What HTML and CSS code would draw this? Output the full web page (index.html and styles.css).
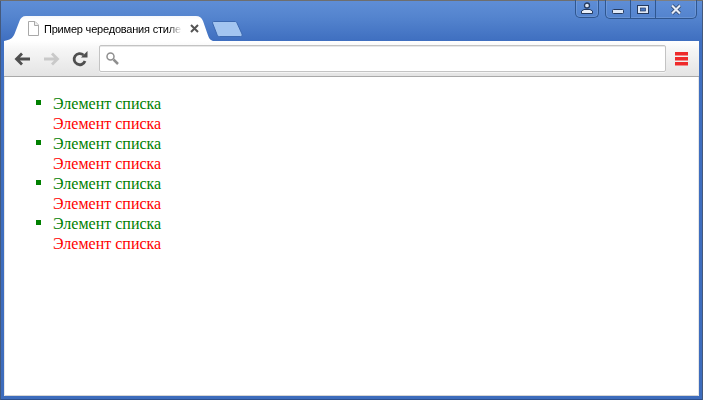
FILE: index.html
```html
<!DOCTYPE html>
<html lang="ru">
<head>
<meta charset="utf-8">
<title>Пример чередования стилей</title>
<link rel="stylesheet" href="styles.css">
</head>
<body>
<div class="window">
  <div class="titlebar">
    <div class="tab">
      <svg class="tab-shape" width="209" height="25" viewBox="0 0 209 25"><defs><linearGradient id="tabfill" x1="0" y1="0" x2="0" y2="1"><stop offset="0" stop-color="#f6f8fb"/><stop offset="0.15" stop-color="#fff"/></linearGradient></defs><path d="M0 25C6 24 8.500 22.500 10.500 18L15.500 5C16.500 2 18.500 0 22 0H192C195.500 0 197.500 1.500 199 5L203.500 18C205 22.500 206 24 209 25Z" fill="url(#tabfill)"/></svg>
      <svg class="page-icon" width="13" height="17" viewBox="0 0 13 17"><path d="M1.500 1.500H8L11.500 5V15.500H1.500Z" fill="#fff" stroke="#a9a9a9"/><path d="M7.500 1.500V5.500H11.500" fill="#eee" stroke="#a9a9a9"/></svg>
      <span class="tab-title">Пример чередования стиле</span>
      <svg class="tab-close" width="9" height="9" viewBox="0 0 9 9"><path d="M1 1L8 8M8 1L1 8" stroke="#555" stroke-width="2"/></svg>
    </div>
    <svg class="new-tab" width="31" height="16" viewBox="0 0 31 16"><path d="M0.500 2C0.500 1 1 0.500 2 0.500H23C24 0.500 24.500 1 25 2L30 13C30.500 14.500 30 15.500 28.500 15.500H7.500C6 15.500 5.500 15 5 13.500Z" fill="#a3c5f0" stroke="#3c69b0"/></svg>
    <div class="controls">
      <div class="ctl ctl-user">
        <svg width="14" height="13" viewBox="0 0 14 13"><circle cx="7" cy="3.500" r="2.500" fill="#dfe8f6" stroke="#253a5e" stroke-width="1.300"/><path d="M1.500 11.500V9L4 7.500H10L12.500 9V11.500Z" fill="#e8eef8" stroke="#253a5e"/></svg>
      </div>
      <div class="ctl-group">
        <div class="ctl ctl-min"><svg width="12" height="5" viewBox="0 0 12 5"><rect x="0.500" y="0.500" width="11" height="4" rx="1" fill="#dfe8f6" stroke="#253a5e"/></svg></div>
        <div class="ctl ctl-max"><svg width="12" height="9" viewBox="0 0 12 9"><rect x="0.500" y="0.500" width="11" height="8" fill="#dfe8f6" stroke="#253a5e"/><rect x="3.500" y="3" width="5" height="3" fill="#4a78c4" stroke="#253a5e" stroke-width="0.700"/></svg></div>
        <div class="ctl ctl-close"><svg width="12" height="11" viewBox="0 0 12 11"><path d="M2 1.500L10 9.500M10 1.500L2 9.500" stroke="#253a5e" stroke-width="3.600"/><path d="M2 1.500L10 9.500M10 1.500L2 9.500" stroke="#e6edf8" stroke-width="2.200"/></svg></div>
      </div>
    </div>
  </div>
  <div class="toolbar">
    <svg class="nav" width="17" height="14" viewBox="0 0 17 14"><path d="M16 7H4M8 1.500L2.500 7L8 12.500" fill="none" stroke="#4f4f4f" stroke-width="2.800"/></svg>
    <svg class="nav" width="17" height="14" viewBox="0 0 17 14"><path d="M1 7H13M9 1.500L14.500 7L9 12.500" fill="none" stroke="#c9c9c9" stroke-width="2.800"/></svg>
    <svg class="nav" width="16" height="16" viewBox="0 0 16 16"><path d="M13 10A5.600 5.600 0 1 1 11.500 4" fill="none" stroke="#4f4f4f" stroke-width="2.800"/><path d="M9 6.500H15.500V0Z" fill="#4f4f4f"/></svg>
    <div class="omnibox">
      <svg width="15" height="15" viewBox="0 0 15 15"><circle cx="5.500" cy="5.500" r="3.500" fill="none" stroke="#8f8f8f" stroke-width="1.500"/><path d="M8.500 8.500L13 13" stroke="#8f8f8f" stroke-width="2.500"/></svg>
    </div>
    <div class="menu"><span></span><span></span><span></span></div>
  </div>
  <div class="content">
    <ul class="list">
      <li class="odd">Элемент списка</li>
      <li class="even">Элемент списка</li>
      <li class="odd">Элемент списка</li>
      <li class="even">Элемент списка</li>
      <li class="odd">Элемент списка</li>
      <li class="even">Элемент списка</li>
      <li class="odd">Элемент списка</li>
      <li class="even">Элемент списка</li>
    </ul>
  </div>
</div>
</body>
</html>
```
FILE: styles.css
```css
html, body { margin: 0; padding: 0; height: 100%; overflow: hidden; }
.window {
  width: 703px; height: 400px; box-sizing: border-box;
  display: flex; flex-direction: column;
  padding: 0 4px 4px 4px;
  background: linear-gradient(to bottom, #5f8ed6 0, #5585cf 16px, #3f6fc0 41px, #3d6cbc 100%);
  box-shadow: inset 0 1px 0 #6e6e6e, inset 1px 0 0 #44597c, inset -1px 0 0 #44597c, inset 0 -1px 0 #2d4f8c;
}
.titlebar { height: 41px; flex: none; display: flex; align-items: flex-end; position: relative; }
.tab {
  position: relative; width: 209px; height: 25px; flex: none;
  display: flex; align-items: center; box-sizing: border-box; padding-left: 23px;
}
.tab-shape { position: absolute; left: 0; top: 0; }
.page-icon, .tab-title, .tab-close { position: relative; }
.page-icon { flex: none; margin-right: 4px; margin-top: -1px; }
.tab-title {
  font: 11px/14px "Liberation Sans", Arial, sans-serif; color: #000;
  letter-spacing: -0.2px;
  width: 138px; flex: none; white-space: nowrap; overflow: hidden;
  -webkit-mask-image: linear-gradient(to right, #000 124px, transparent 138px);
  mask-image: linear-gradient(to right, #000 124px, transparent 138px);
}
.tab-close { flex: none; margin-left: 8px; }
.new-tab { flex: none; margin-left: -1px; margin-bottom: 4px; }
.controls { position: absolute; top: 0; right: 2px; display: flex; gap: 6px; }
.ctl { display: flex; align-items: center; justify-content: center; height: 18px; box-sizing: border-box; }
.ctl-user {
  width: 24px; border: 1px solid #2f568f; border-top: 0; border-radius: 0 0 5px 5px;
  box-shadow: inset 0 0 0 1px rgba(255,255,255,.12);
}
.ctl-group {
  display: flex; border: 1px solid #2f568f; border-top: 0; border-radius: 0 0 5px 5px;
  box-shadow: inset 0 0 0 1px rgba(255,255,255,.12);
}
.ctl-min { width: 25px; border-right: 1px solid #2f568f; align-items: flex-end; padding-bottom: 4px; }
.ctl-max { width: 25px; border-right: 1px solid #2f568f; }
.ctl-close { width: 40px; }
.toolbar {
  height: 36px; flex: none; box-sizing: border-box; display: flex; align-items: center;
  padding: 0 11px 0 10px; gap: 12px;
  background: linear-gradient(to bottom, #fff 0, #f6f6f6 8px, #e4e4e4 100%);
  border-bottom: 1px solid #a9a9a9;
}
.nav { flex: none; }
.omnibox {
  flex: 1; height: 27px; box-sizing: border-box; margin-left: -1px; margin-right: -3px;
  background: #fff; border: 1px solid #c3c3c3; border-radius: 2px;
  box-shadow: 0 1px 0 #f4f4f4, inset 0 1px 0 #e8e8e8;
  display: flex; align-items: center; padding-left: 5px;
}
.menu { flex: none; width: 13px; display: flex; flex-direction: column; gap: 1px; }
.menu span { display: block; height: 4px; box-sizing: border-box; background: #ee2a2a; border-bottom: 1px solid #f28a8a; }
.content { flex: 1; background: #fff; box-shadow: inset 1px 0 0 #e6e6e6, inset -1px 0 0 #e6e6e6, inset 0 -1px 0 #d6d6d6; }
.list { margin: 17px 0 0 0; padding: 0 0 0 49px; list-style: none; font: 16px/20px "Liberation Serif", "Times New Roman", serif; }
.odd { color: #008000; }
.odd::before {
  content: ""; display: inline-block; width: 5px; height: 5px; background: #008000;
  margin: 0 12px 0 -17px; vertical-align: 4px;
}
.even { color: #ff0000; }
```
